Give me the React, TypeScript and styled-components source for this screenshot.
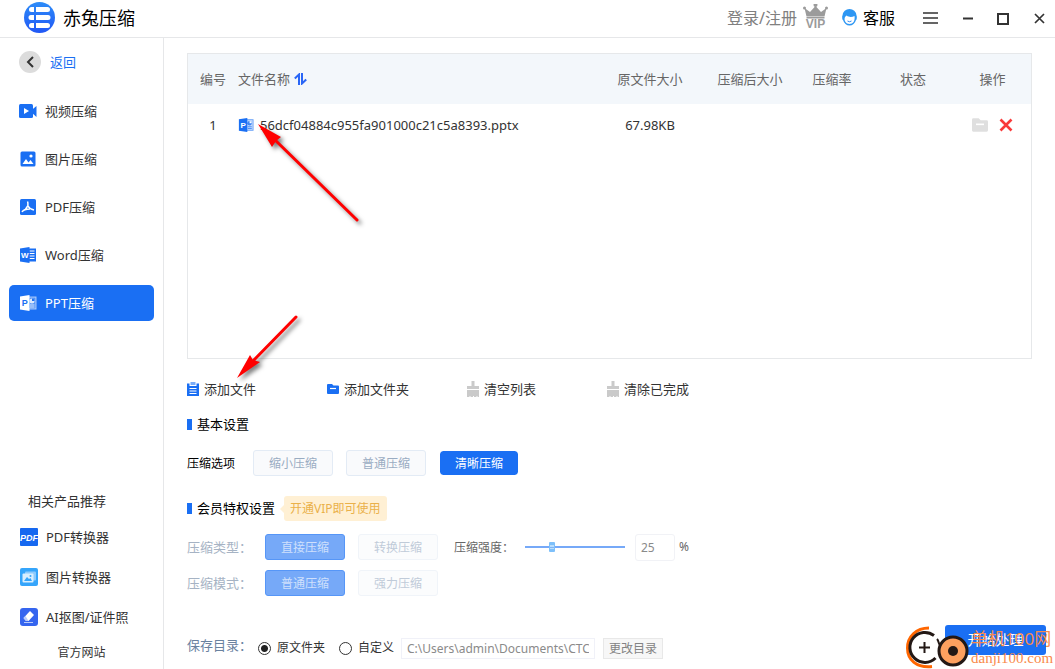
import React from "react";
import styled, { createGlobalStyle, css } from "styled-components";

const blue = "#1a6ff3";

const GlobalStyle = createGlobalStyle`
  * { box-sizing: border-box; }
  body {
    margin: 0;
    background: #fff;
    color: #333;
    font: 13px/20px "Noto Sans", "Noto Sans CJK SC", sans-serif;
  }
  button, input { font: inherit; color: inherit; margin: 0; }
  button { padding: 0; border: 0; background: none; white-space: nowrap; }
  a { color: inherit; text-decoration: none; }
  svg { display: block; flex: none; }
`;

const Shell = styled.div`
  min-height: 100vh;
  display: flex;
  flex-direction: column;
  position: relative;
  overflow: hidden;
`;

const Header = styled.header`
  height: 38px;
  padding: 0 8px 2px 24px;
  display: flex;
  align-items: center;
  border-bottom: 1px solid #e6e7e9;
`;

const Brand = styled.h1`
  display: flex;
  align-items: center;
  gap: 8px;
  margin: 0 auto 0 0;
  font-size: 18px;
  line-height: 24px;
  font-weight: 400;
  color: #000;
`;

const Account = styled.div`
  display: flex;
  align-items: center;
  gap: 6px;
  font-size: 16px;
  line-height: 24px;
  color: #808080;
`;

const Service = styled.button`
  display: flex;
  align-items: center;
  gap: 6px;
  margin-left: 8px;
  color: #000;
`;

const WindowControls = styled.div`
  display: flex;
  align-items: center;
  gap: 20px;
  margin-left: 26px;
`;

const Body = styled.div`
  flex: 1;
  display: flex;
`;

const Sidebar = styled.aside`
  width: 164px;
  flex: none;
  border-right: 1px solid #e6e7e9;
  padding: 12px 9px 6px;
  display: flex;
  flex-direction: column;
`;

const Back = styled.button`
  display: flex;
  align-items: center;
  gap: 9px;
  height: 24px;
  padding-left: 10px;
  margin-bottom: 19px;
  color: ${blue};
`;

const Nav = styled.nav`
  display: flex;
  flex-direction: column;
  gap: 12px;
`;

const NavItem = styled.a<{ $active?: boolean }>`
  display: flex;
  align-items: center;
  gap: 8px;
  height: 36px;
  padding-left: 10px;
  border-radius: 5px;
  ${(p) => p.$active && css`background: ${blue}; color: #fff;`}
`;

const Related = styled.section`
  margin-top: auto;
  display: flex;
  flex-direction: column;
`;

const RelatedTitle = styled.h2`
  margin: 0 0 6px 19px;
  font-size: 13px;
  line-height: 20px;
  font-weight: 400;
`;

const Product = styled.a`
  display: flex;
  align-items: center;
  gap: 8px;
  height: 40px;
  padding-left: 11px;
`;

const Site = styled.a`
  align-self: center;
  margin-top: 6px;
  font-size: 12px;
`;

const Main = styled.main`
  flex: 1;
  min-width: 0;
  display: flex;
  flex-direction: column;
  padding-top: 15px;
`;

const Content = styled.div`
  flex: 1;
  display: flex;
  flex-direction: column;
  padding: 0 23px;
`;

const FileBox = styled.div`
  flex: 1;
  border: 1px solid #e6e8ea;
`;

const FileTable = styled.table`
  width: 100%;
  table-layout: fixed;
  border-collapse: collapse;
  th {
    height: 50px;
    padding: 0;
    background: #f3f7fb;
    color: #666;
    font-weight: 400;
  }
  td { height: 42px; padding: 0; text-align: center; }
  th:nth-child(2), td:nth-child(2) { text-align: left; }
  th:last-child, td:last-child { padding-right: 8px; }
`;

const Inline = styled.span<{ $gap: number; $center?: boolean }>`
  display: flex;
  align-items: center;
  justify-content: ${(p) => (p.$center ? "center" : "flex-start")};
  gap: ${(p) => p.$gap}px;
`;

const Toolbar = styled.div`
  display: flex;
  margin-top: 20px;
`;

const Tool = styled.button`
  display: flex;
  align-items: center;
  gap: 5px;
  width: 140px;
  height: 20px;
`;

const SectionTitle = styled.h2<{ $top: number }>`
  display: flex;
  align-items: center;
  margin: ${(p) => p.$top}px 0 0;
  height: ${(p) => (p.$top > 16 ? 26 : 20)}px;
  font-size: 13px;
  font-weight: 400;
  color: #000;
  &::before {
    content: "";
    width: 5px;
    height: 11px;
    margin-right: 5px;
    background: ${blue};
  }
`;

const VipTip = styled.span`
  position: relative;
  margin-left: 9px;
  padding: 0 6px;
  border-radius: 3px;
  background: #fff0d4;
  color: #eab04a;
  font-size: 12px;
  line-height: 25px;
  &::before {
    content: "";
    position: absolute;
    left: -4px;
    top: 9px;
    border: 4px solid transparent;
    border-left: 0;
    border-right-color: #fff0d4;
  }
`;

const Row = styled.div<{ $top: number }>`
  display: flex;
  align-items: center;
  gap: 13px;
  height: 26px;
  margin-top: ${(p) => p.$top}px;
`;

const RowLabel = styled.span<{ $wide?: boolean }>`
  width: ${(p) => (p.$wide ? 65 : 53)}px;
  padding-top: ${(p) => (p.$wide ? 0 : 2)}px;
  font-size: ${(p) => (p.$wide ? 13 : 12)}px;
  color: ${(p) => (p.$wide ? "#a6b3c4" : "#000")};
`;

const Choice = styled.button<{ $on?: boolean; $locked?: boolean }>`
  width: 80px;
  height: 26px;
  padding-top: 2px;
  border: 1px solid ${(p) => (p.$on ? blue : "#e3ebf5")};
  border-radius: 3px;
  background: ${(p) => (p.$on ? blue : "#f9fafc")};
  color: ${(p) => (p.$on ? "#fff" : "#9aacc2")};
  font-size: 12px;
  ${(p) => p.$locked && !p.$on && css`
    border-color: #f0f4f9;
    background: #fbfcfd;
    color: #c0cbd9;
  `}
  ${(p) => p.$locked && p.$on && css`
    border-color: #5696f7;
    background: #76a9f8;
    color: #cfe0fc;
  `}
  ${(p) => p.$on && !p.$locked && css`
    border-color: #fff;
    background-clip: padding-box;
    border-radius: 4px;
  `}
`;

const Choices = styled.div`
  display: flex;
  gap: 13px;
`;

const Strength = styled.div`
  display: flex;
  align-items: center;
  margin-left: 3px;
  font-size: 12px;
  color: #666;
  label { width: 71px; padding-top: 2px; }
`;

const Slider = styled.input`
  appearance: none;
  width: 100px;
  height: 16px;
  background: linear-gradient(#76a9f8, #76a9f8) center / 100% 2px no-repeat;
  &::-webkit-slider-thumb {
    appearance: none;
    width: 6px;
    height: 10px;
    border: 1px solid #7ec0fa;
    border-width: 3px 1px;
    border-radius: 1px;
    background: linear-gradient(#7db4f8, #7db4f8) center / 100% 1px no-repeat #b9defd;
  }
`;

const Percent = styled.input`
  width: 40px;
  height: 27px;
  margin: 0 4px 0 10px;
  padding: 0 5px;
  border: 1px solid #f1f2f6;
  border-radius: 3px;
  background: #fff;
  color: #8a8a8a;
`;

const Footer = styled.footer`
  display: flex;
  height: 44px;
  margin-top: 29px;
  padding: 0 9px 0 23px;
  font-size: 12px;
`;

const SavePath = styled.div`
  flex: 1;
  display: flex;
  align-items: center;
  padding-top: 2px;
`;

const SaveLabel = styled.span`
  width: 71px;
  padding-bottom: 6px;
  font-size: 13px;
  color: #6a829f;
`;

const RadioLabel = styled.label`
  display: flex;
  align-items: center;
  gap: 6px;
  margin-right: 14px;
  &:last-of-type { margin-right: 7px; }
`;

const Radio = styled.input`
  appearance: none;
  width: 13px;
  height: 13px;
  border: 1px solid #333;
  border-radius: 50%;
  &:checked { background: radial-gradient(circle, #222 3px, transparent 4px); }
`;

const PathInput = styled.input`
  width: 194px;
  height: 21px;
  padding: 0 5px;
  border: 1px solid #f0f1f8;
  background: #fff;
  color: #8a8a8a;
`;

const ChangeDir = styled.button`
  width: 60px;
  height: 21px;
  margin-left: 8px;
  border: 1px solid #e8e8e8;
  background: #f7f7f7;
  color: #838383;
`;

const Start = styled.button`
  width: 101px;
  height: 30px;
  border-radius: 3px;
  background: ${blue};
  color: #fff;
  font-size: 14px;
`;

const Arrow = styled.svg<{ $x: number; $y: number }>`
  position: absolute;
  left: ${(p) => p.$x}px;
  top: ${(p) => p.$y}px;
  pointer-events: none;
  overflow: visible;
  filter: drop-shadow(3px 3px 2px rgba(0, 0, 0, 0.5));
`;

const Watermark = styled.div`
  position: absolute;
  right: 2px;
  bottom: 0;
  display: flex;
  align-items: flex-end;
  gap: 2px;
  color: #f98a4b;
  pointer-events: none;
`;

const WatermarkText = styled.div`
  display: flex;
  flex-direction: column;
  width: 82px;
  padding-bottom: 3px;
  white-space: nowrap;
  font-size: 17px;
  line-height: 22px;
  small {
    font: 15px/16px "Liberation Serif", serif;
  }
`;

const Logo = () => (
  <svg width="31" height="31" viewBox="0 0 31 31">
    <defs>
      <linearGradient id="logo" x2="0" y2="1">
        <stop stopColor="#2d8cf8" /><stop offset="1" stopColor="#2157f5" />
      </linearGradient>
    </defs>
    <circle cx="15.500" cy="15.500" r="15.500" fill="url(#logo)" />
    <g fill="#fff">
      <path d="M7.500 5H10v5H7.500a2.500 2.500 0 0 1 0-5zM12 5H23.500a2.500 2.500 0 0 1 0 5H12zM7 13H10v5H7a2.500 2.500 0 0 1 0-5zM12 13H24a2.500 2.500 0 0 1 0 5H12zM7.500 21H10v5H7.500a2.500 2.500 0 0 1 0-5zM12 21H23.500a2.500 2.500 0 0 1 0 5H12z" />
    </g>
  </svg>
);

const VipCrown = () => (
  <svg width="25" height="28" viewBox="0 1 25 28" fill="#9b9b9b" aria-label="VIP">
    <circle cx="1.500" cy="5" r="1.500" /><circle cx="23.500" cy="5" r="1.500" /><circle cx="12.500" cy="2" r="2" />
    <path d="M1.500 5l5.500 4 5.500-6 5.500 6 5.500-4-2 8.500h-18zM3.500 14h18v1.500h-18z" />
    <text x="12.500" y="25" textAnchor="middle" fontFamily="Liberation Sans" fontWeight="700" fontSize="12">VIP</text>
  </svg>
);

const Agent = () => (
  <svg width="15" height="17" viewBox="0 0 15 17">
    <path d="M7.500 0a7 7 0 0 1 7 6.500c.5 0 .5 4.500-.5 4.500-1 3.500-3.500 5.500-6.500 5.500S2 14.500 1 11C0 11 0 6.500.5 6.500A7 7 0 0 1 7.500 0z" fill="#2e97f3" />
    <path d="M4.500 6.500c3 2 5.500 1.500 8 .5.800 5-1.500 8-5 8s-6-3.500-4.500-7z" fill="#fff" />
    <path d="M5.500 12q2 1.500 4 0" stroke="#2e8af3" fill="none" />
  </svg>
);

const BackIcon = () => (
  <svg width="22" height="22" viewBox="0 0 22 22">
    <circle cx="11" cy="11" r="11" fill="#dcdcdc" />
    <path d="M14 6 9 11l5 5" stroke="#333" strokeWidth="2" fill="none" />
  </svg>
);

const VideoIcon = () => (
  <svg width="18" height="16" viewBox="0 0 18 16">
    <rect y="1" width="14" height="14" rx="1.500" fill={blue} />
    <path d="M12 7.500 17.500 3v11L12 9z" fill={blue} />
    <path d="M5 5l5 3-5 3z" fill="#fff" />
  </svg>
);

const ImageIcon = () => (
  <svg width="18" height="16" viewBox="-1 0 18 16">
    <rect x=".5" y=".5" width="15" height="15" rx="1.500" fill={blue} />
    <circle cx="11" cy="5" r="1.600" fill="#fff" />
    <path d="M2.500 13 6 8l2.500 3.500L10.500 9l3 4z" fill="#fff" />
  </svg>
);

const PdfIcon = () => (
  <svg width="18" height="16" viewBox="-1 0 18 16">
    <rect width="16" height="16" rx="1.500" fill={blue} />
    <path d="M7.500 2.500c1 2 0 3.500.5 4.500s2 3 6 4M2 13c1-2 4-3 8-3M8 6.500 5 11" stroke="#fff" strokeWidth="1.500" fill="none" />
  </svg>
);

type OfficeProps = { letter: "W" | "P"; fore?: string; back?: string; size?: number };
const OfficeIcon = ({ letter, fore = blue, back = "#fff", size = 18 }: OfficeProps) => (
  <svg width={size} height={size} viewBox="0 0 18 18">
    {letter === "W" ? (
      <>
        <rect x="9" y="2.500" width="8" height="13" fill={fore} />
        <path d="M10.500 5h5M10.500 7.500h5M10.500 10h5M10.500 12.500h5" stroke={back} strokeWidth="1.200" />
      </>
    ) : (
      <>
        <rect x="9" y="3" width="8" height="12" fill={fore} fillOpacity=".25" stroke={fore} strokeOpacity=".6" />
        <circle cx="13" cy="7" r="2.500" fill={fore} fillOpacity=".8" />
        <path d="M13 7V4.500A2.500 2.500 0 0 1 15.500 7z" fill={back} />
        <path d="M11 11h4.500M11 13h4.500" stroke={fore} strokeOpacity=".8" />
      </>
    )}
    <path d="M1 2.500 10.500 1v16L1 15.500z" fill={fore} />
    <text x="5.700" y="12" textAnchor="middle" fontFamily="Liberation Sans" fontWeight="700" fontSize={letter === "W" ? 8 : 9} fill={back}>{letter}</text>
  </svg>
);

const PdfApp = () => (
  <svg width="18" height="18" viewBox="0 0 18 18">
    <rect width="18" height="18" rx="1" fill="#1668f0" />
    <text x="9" y="13" textAnchor="middle" fontFamily="Liberation Sans" fontWeight="700" fontStyle="italic" fontSize="9" fill="#fff">PDF</text>
  </svg>
);

const ImageApp = () => (
  <svg width="18" height="18" viewBox="0 0 18 18">
    <rect width="18" height="18" rx="2" fill="#35a5fb" />
    <rect x="5" y="3.500" width="11" height="9" rx="1" fill="#8dcbfd" />
    <rect x="2.500" y="5.500" width="11" height="9" rx="1" fill="#d8eefe" />
    <path d="M4 13 7 9l2 2 1.500-1L12 13z" fill="#35a5fb" /><circle cx="10.500" cy="8" r="1" fill="#35a5fb" />
  </svg>
);

const EraserApp = () => (
  <svg width="18" height="18" viewBox="0 0 18 18">
    <rect width="18" height="18" rx="3" fill="#3565ef" />
    <path d="M10 3 14 7l-5.500 6H6l-2.500-3z" fill="#fff" />
    <path d="M3.500 10 6 13h2.500L5.500 8z" fill="#b9cbfa" />
    <path d="M4 14.500h9" stroke="#b9cbfa" />
  </svg>
);

const SortIcon = () => (
  <svg width="13" height="12" viewBox="0 0 13 12" fill="none" stroke="#2a66f6" strokeWidth="2">
    <path d="M5 12V1.500L.8 5.500M8 0v10.500L12.200 6.500" />
  </svg>
);

const FolderIcon = ({ color, width = 12 }: { color: string; width?: number }) => (
  <svg width={width} height={width} viewBox="0 0 12 12">
    <path d="M1 1h4l1.500 1.500H11a1 1 0 0 1 1 1V10a1 1 0 0 1-1 1H1a1 1 0 0 1-1-1V2a1 1 0 0 1 1-1z" fill={color} />
    <path d="M3 5.500h6" stroke="#fff" strokeWidth="1.200" />
  </svg>
);

const ClipboardIcon = () => (
  <svg width="12" height="14" viewBox="0 0 12 14">
    <path d="M0 1.500h2.500V4h7V1.500H12V14H0z" fill={blue} />
    <rect x="3.500" y="0" width="5" height="3" fill="#7badf8" />
    <path d="M2.500 6.500h7M2.500 9h7M2.500 11.500h7" stroke="#fff" />
  </svg>
);

const BrushIcon = () => (
  <svg width="12" height="16" viewBox="0 0 12 16" fill="#cacaca">
    <path d="M4.500 0h3v5H12v3H0V5h4.500zM0 9h12v7h-1.500v-1H9.500v1H7v-1H6v1H3.500v-1H2.500v1H0z" />
  </svg>
);

const WatermarkLogo = () => (
  <svg width="63" height="44" viewBox="0 0 63 44" fill="none">
    <path d="M23 3C10 3 1.500 12 1.500 23c0 12 9 20 24.500 18.500" stroke="#f60" strokeWidth="3" />
    <path d="M28 10.500A15 15 0 1 0 29.500 33" stroke="#231815" strokeWidth="3" fill="#fff" />
    <path d="M18.500 17v11M13 22.500h11" stroke="#231815" strokeWidth="2" />
    <path d="M31 14c2 2 1 4 3 6" stroke="#231815" strokeWidth="2" />
    <circle cx="47" cy="26" r="14" fill="#fda05f" stroke="#231815" strokeWidth="3" />
    <circle cx="47" cy="26" r="5" fill="#231815" />
  </svg>
);

const navItems = [
  { label: "视频压缩", icon: <VideoIcon /> },
  { label: "图片压缩", icon: <ImageIcon /> },
  { label: "PDF压缩", icon: <PdfIcon /> },
  { label: "Word压缩", icon: <OfficeIcon letter="W" /> },
  { label: "PPT压缩", icon: <OfficeIcon letter="P" fore="#fff" back={blue} />, active: true },
];

const products = [
  { label: "PDF转换器", icon: <PdfApp /> },
  { label: "图片转换器", icon: <ImageApp /> },
  { label: "AI抠图/证件照", icon: <EraserApp /> },
];

export default function App() {
  return (
    <Shell>
      <GlobalStyle />
      <Header>
        <Brand><Logo />赤兔压缩</Brand>
        <Account>
          <button>登录/注册</button>
          <VipCrown />
          <Service><Agent />客服</Service>
        </Account>
        <WindowControls>
          <button aria-label="菜单">
            <svg width="20" height="16" viewBox="0 0 20 16"><path d="M2 3h15M2 8h15M2 13h15" stroke="#333" strokeWidth="1.500" /></svg>
          </button>
          <button aria-label="最小化">
            <svg width="14" height="16" viewBox="0 0 14 16"><path d="M2 8.500h10" stroke="#333" strokeWidth="2" /></svg>
          </button>
          <button aria-label="最大化">
            <svg width="16" height="16" viewBox="0 0 16 16"><rect x="3" y="4" width="10" height="10" fill="none" stroke="#333" strokeWidth="2" /></svg>
          </button>
          <button aria-label="关闭">
            <svg width="16" height="16" viewBox="0 0 16 16"><path d="M4 4l9 9M13 4l-9 9" stroke="#333" strokeWidth="1.700" /></svg>
          </button>
        </WindowControls>
      </Header>
      <Body>
        <Sidebar>
          <Back><BackIcon />返回</Back>
          <Nav>
            {navItems.map((n) => (
              <NavItem key={n.label} href="#" $active={n.active}>{n.icon}{n.label}</NavItem>
            ))}
          </Nav>
          <Related>
            <RelatedTitle>相关产品推荐</RelatedTitle>
            {products.map((p) => (
              <Product key={p.label} href="#">{p.icon}{p.label}</Product>
            ))}
            <Site href="#">官方网站</Site>
          </Related>
        </Sidebar>
        <Main>
          <Content>
            <FileBox>
              <FileTable>
                <colgroup>
                  <col width="50" /><col /><col width="100" /><col width="100" />
                  <col width="64" /><col width="98" /><col width="69" />
                </colgroup>
                <thead>
                  <tr>
                    <th>编号</th>
                    <th><Inline $gap={4}>文件名称<SortIcon /></Inline></th>
                    <th>原文件大小</th>
                    <th>压缩后大小</th>
                    <th>压缩率</th>
                    <th>状态</th>
                    <th>操作</th>
                  </tr>
                </thead>
                <tbody>
                  <tr>
                    <td>1</td>
                    <td><Inline $gap={6}><OfficeIcon letter="P" size={16} />56dcf04884c955fa901000c21c5a8393.pptx</Inline></td>
                    <td>67.98KB</td>
                    <td /><td /><td />
                    <td>
                      <Inline $gap={11} $center>
                        <button aria-label="打开文件夹"><FolderIcon color="#dfdfdf" width={16} /></button>
                        <button aria-label="删除">
                          <svg width="14" height="14" viewBox="0 0 14 14"><path d="M1.500 1.500l11 11M12.500 1.500l-11 11" stroke="#f93a3a" strokeWidth="2.600" /></svg>
                        </button>
                      </Inline>
                    </td>
                  </tr>
                </tbody>
              </FileTable>
            </FileBox>
            <Toolbar>
              <Tool><ClipboardIcon />添加文件</Tool>
              <Tool><FolderIcon color={blue} />添加文件夹</Tool>
              <Tool><BrushIcon />清空列表</Tool>
              <Tool><BrushIcon />清除已完成</Tool>
            </Toolbar>
            <SectionTitle $top={15}>基本设置</SectionTitle>
            <Row $top={16}>
              <RowLabel>压缩选项</RowLabel>
              <Choices>
                <Choice>缩小压缩</Choice>
                <Choice>普通压缩</Choice>
                <Choice $on>清晰压缩</Choice>
              </Choices>
            </Row>
            <SectionTitle $top={19}>会员特权设置<VipTip>开通VIP即可使用</VipTip></SectionTitle>
            <Row $top={13}>
              <RowLabel $wide>压缩类型：</RowLabel>
              <Choices>
                <Choice $on $locked>直接压缩</Choice>
                <Choice $locked>转换压缩</Choice>
              </Choices>
              <Strength>
                <label htmlFor="strength">压缩强度：</label>
                <Slider id="strength" type="range" min={0} max={100} defaultValue={25} />
                <Percent type="text" aria-label="压缩强度百分比" defaultValue="25" />
                %
              </Strength>
            </Row>
            <Row $top={10}>
              <RowLabel $wide>压缩模式：</RowLabel>
              <Choices>
                <Choice $on $locked>普通压缩</Choice>
                <Choice $locked>强力压缩</Choice>
              </Choices>
            </Row>
          </Content>
          <Footer>
            <SavePath>
              <SaveLabel>保存目录：</SaveLabel>
              <RadioLabel><Radio type="radio" name="dir" defaultChecked />原文件夹</RadioLabel>
              <RadioLabel><Radio type="radio" name="dir" />自定义</RadioLabel>
              <PathInput type="text" aria-label="保存目录" defaultValue="C:\Users\admin\Documents\CTCompress" />
              <ChangeDir>更改目录</ChangeDir>
            </SavePath>
            <Start>开始处理</Start>
          </Footer>
        </Main>
      </Body>
      <Arrow $x={256} $y={122} width="106" height="102" viewBox="0 0 106 102" aria-hidden="true">
        <path d="M17 16 101 98" stroke="#f00" strokeWidth="3" strokeLinecap="round" />
        <path d="M2 2 25 15 20 19 16 25z" fill="#f00" />
      </Arrow>
      <Arrow $x={235} $y={314} width="66" height="66" viewBox="0 0 66 66" aria-hidden="true">
        <path d="M17 48 61 3" stroke="#f00" strokeWidth="3" strokeLinecap="round" />
        <path d="M2 64 15 41 18 46 25 48z" fill="#f00" />
      </Arrow>
      <Watermark aria-hidden="true">
        <WatermarkLogo />
        <WatermarkText>单机100网<small>danji100.com</small></WatermarkText>
      </Watermark>
    </Shell>
  );
}
